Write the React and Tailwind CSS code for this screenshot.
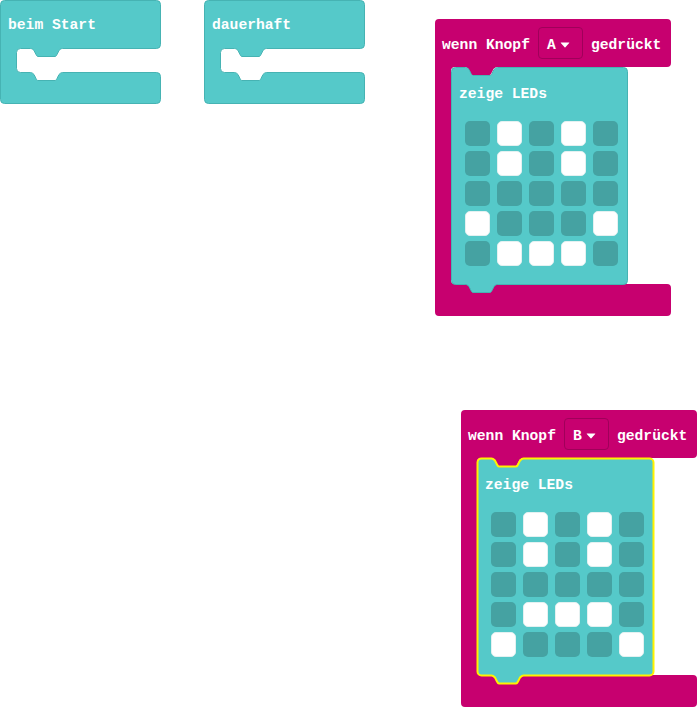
import React from "react";

const DOWN_R =
  "c 1.5,0 2.5,1 3.5,2 l 2,4 c 0.5,1 1,2 2,2 h 17 c 1,0 1.5,-1 2,-2 l 2,-4 c 1,-1 2,-2 3.5,-2";
const DOWN_L =
  "c -1.5,0 -2.5,1 -3.5,2 l -2,4 c -0.5,1 -1,2 -2,2 h -17 c -1,0 -1.5,-1 -2,-2 l -2,-4 c -1,-1 -2,-2 -3.5,-2";

const TEAL = "#55c9c9";
const TEAL_STROKE = "#46b3b3";
const MAGENTA = "#c7006f";

function CBlock({ label, pos }) {
  const W = 160;
  const H = 103;
  const d = `M0,4 A4,4 0 0 1 4,0 H${W - 4} A4,4 0 0 1 ${W},4 V44 A4,4 0 0 1 ${W - 4},48 H62 ${DOWN_L} H20 A4,4 0 0 0 16,52 V68 A4,4 0 0 0 20,72 H30 ${DOWN_R} H${W - 4} A4,4 0 0 1 ${W},76 V${H - 4} A4,4 0 0 1 ${W - 4},${H} H4 A4,4 0 0 1 0,${H - 4} Z`;
  return (
    <div className={`absolute top-0 w-[161px] h-[104px] ${pos}`}>
      <svg className="absolute inset-0" width="161" height="104">
        <path d={d} transform="translate(0.5,0.5)" fill={TEAL} stroke={TEAL_STROKE} />
      </svg>
      <div className="relative pl-2 pt-[15px] leading-5 text-[14.67px] font-bold text-white whitespace-pre">
        {label}
      </div>
    </div>
  );
}

function Caret() {
  return (
    <svg width="10" height="6" viewBox="0 0 10 6">
      <path d="M1,0.5 H9 Q9.6,0.5 9.2,1 L5.4,5.3 Q5,5.7 4.6,5.3 L0.8,1 Q0.4,0.5 1,0.5 Z" fill="white" />
    </svg>
  );
}

function LedGrid({ leds }) {
  return (
    <div className="ml-[14px] mt-[17px] grid grid-cols-[repeat(5,25px)] gap-x-[7px] gap-y-[5px]">
      {leds.flatMap((row, r) =>
        row.split("").map((c, i) =>
          c === "1" ? (
            <div key={`${r}-${i}`} className="w-[25px] h-[25px] rounded-[5px] bg-white border border-[#e3f1f1]" />
          ) : (
            <div key={`${r}-${i}`} className="w-[25px] h-[25px] rounded-[5px] bg-[#45a2a2]" />
          )
        )
      )}
    </div>
  );
}

function ShowLeds({ leds, selected }) {
  const w = 176;
  const h = 217;
  const d = `M0,4 A4,4 0 0 1 4,0 H14 ${DOWN_R} H${w - 4} A4,4 0 0 1 ${w},4 V${h - 4} A4,4 0 0 1 ${w - 4},${h} H46 ${DOWN_L} H4 A4,4 0 0 1 0,${h - 4} Z`;
  return (
    <div className="relative ml-4 w-[177px] h-[218px]">
      <svg className="absolute inset-0 overflow-visible" width="177" height="226">
        <path
          d={d}
          transform="translate(0.5,0.5)"
          fill={TEAL}
          stroke={selected ? "#fff200" : TEAL_STROKE}
          strokeWidth={selected ? 2 : 1}
        />
      </svg>
      <div className="relative">
        <div className="pl-2 pt-[17px] leading-5 text-[14.67px] font-bold text-white whitespace-pre">zeige LEDs</div>
        <LedGrid leds={leds} />
      </div>
    </div>
  );
}

function HatBlock({ letter, pos, leds, selected }) {
  const W = 236;
  const H = 297;
  const d = `M0,4 A4,4 0 0 1 4,0 H${W - 4} A4,4 0 0 1 ${W},4 V44 A4,4 0 0 1 ${W - 4},48 H62 ${DOWN_L} H20 A4,4 0 0 0 16,52 V261 A4,4 0 0 0 20,265 H${W - 4} A4,4 0 0 1 ${W},269 V${H - 4} A4,4 0 0 1 ${W - 4},${H} H4 A4,4 0 0 1 0,${H - 4} Z`;
  return (
    <div className={`absolute w-[237px] h-[298px] ${pos}`}>
      <svg className="absolute inset-0" width="237" height="298">
        <path d={d} fill={MAGENTA} />
      </svg>
      <div className="relative flex flex-col">
        <div className="h-12 flex items-center pl-[7px] gap-2 text-[14.67px] leading-5 font-bold text-white whitespace-pre">
          <span className="pt-1">wenn Knopf</span>
          <div className="h-8 w-[45px] flex items-center pl-2 gap-[4px] rounded-[4px] border border-[#a0005a]">
            <span className="pt-1">{letter}</span>
            <div className="pt-[3px]">
              <Caret />
            </div>
          </div>
          <span className="pt-1">gedrückt</span>
        </div>
        <ShowLeds leds={leds} selected={selected} />
      </div>
    </div>
  );
}

export default function App() {
  const ledsA = ["01010", "01010", "00000", "10001", "01110"];
  const ledsB = ["01010", "01010", "00000", "01110", "10001"];
  return (
    <div className="relative w-[697px] h-[707px] bg-white overflow-hidden font-['Liberation_Mono','DejaVu_Sans_Mono',monospace]">
      <CBlock label="beim Start" pos="left-0" />
      <CBlock label="dauerhaft" pos="left-[204px]" />
      <HatBlock letter="A" pos="left-[435px] top-[19px]" leds={ledsA} />
      <HatBlock letter="B" pos="left-[461px] top-[410px]" leds={ledsB} selected />
    </div>
  );
}
